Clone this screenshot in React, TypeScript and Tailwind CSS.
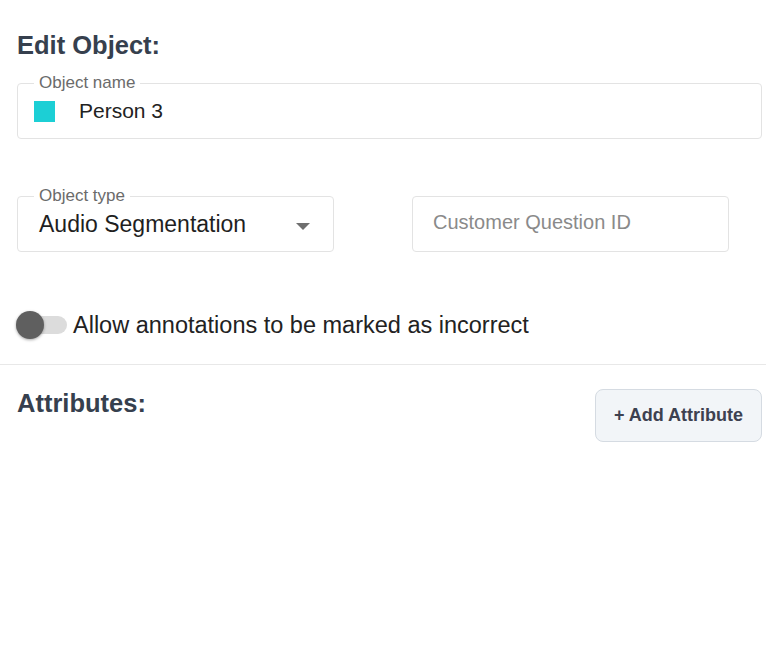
import React from 'react';

const sans = { fontFamily: '"Liberation Sans", Arial, sans-serif' };

function OutlinedField({ label, children, className }: { label?: string; children: React.ReactNode; className?: string }) {
  return (
    <div className={`relative h-[56px] rounded-[4px] border border-[#e3e3e3] bg-white flex items-center ${className ?? ''}`}>
      {label && (
        <span className="absolute left-[16px] -top-[11px] bg-white px-[5px] text-[17px] leading-[20px] text-[#6b6b6b]">
          {label}
        </span>
      )}
      {children}
    </div>
  );
}

export default function App() {
  return (
    <div className="w-[766px] h-[651px] bg-white overflow-hidden" style={sans}>
      <div className="pl-[17px] pr-[4px] pt-[30px]">
        <h2 className="text-[25.5px] leading-[30px] font-bold text-[#36404e]">Edit Object:</h2>

        <OutlinedField label="Object name" className="mt-[23px]">
          <span className="ml-[16px] w-[21px] h-[21px] bg-[#1ccfd5]" />
          <span className="ml-[24px] text-[21px] text-[#222]">Person 3</span>
        </OutlinedField>

        <div className="mt-[57px] flex gap-[78px]">
          <OutlinedField label="Object type" className="w-[317px]">
            <span className="ml-[21px] text-[23px] text-[#1f1f1f]">Audio Segmentation</span>
            <svg className="absolute right-[23px] top-[26px]" width="14" height="7" viewBox="0 0 14 7">
              <path d="M0 0 L14 0 L7 7 Z" fill="#6f6f6f" />
            </svg>
          </OutlinedField>
          <OutlinedField className="w-[317px]">
            <span className="ml-[20px] text-[20px] text-[#8a8a8a] -mt-[4px]">Customer Question ID</span>
          </OutlinedField>
        </div>

        <div className="mt-[59px] flex items-center">
          <div className="relative w-[50px] h-[28px] shrink-0">
            <div className="absolute left-[4px] right-0 top-[5px] h-[18px] rounded-full bg-[#dcdcdc]" />
            <div className="absolute -left-[1px] top-0 w-[28px] h-[28px] rounded-full bg-[#5f5f5f] shadow-[0_1px_3px_rgba(0,0,0,0.35)]" />
          </div>
          <span className="ml-[6px] text-[23.5px] leading-[28px] text-[#222]">Allow annotations to be marked as incorrect</span>
        </div>
      </div>

      <div className="mt-[25px] border-t border-[#e8e8e8]" />

      <div className="pl-[17px] pr-[4px] pt-[24px] flex items-start justify-between">
        <h3 className="-mt-[1px] text-[25.5px] leading-[30px] font-bold text-[#36404e]">Attributes:</h3>
        <button className="h-[53px] w-[167px] rounded-[8px] border border-[#d5dbe2] bg-[#f2f5f8] text-[18px] font-bold text-[#3d4150]">
          + Add Attribute
        </button>
      </div>
    </div>
  );
}
